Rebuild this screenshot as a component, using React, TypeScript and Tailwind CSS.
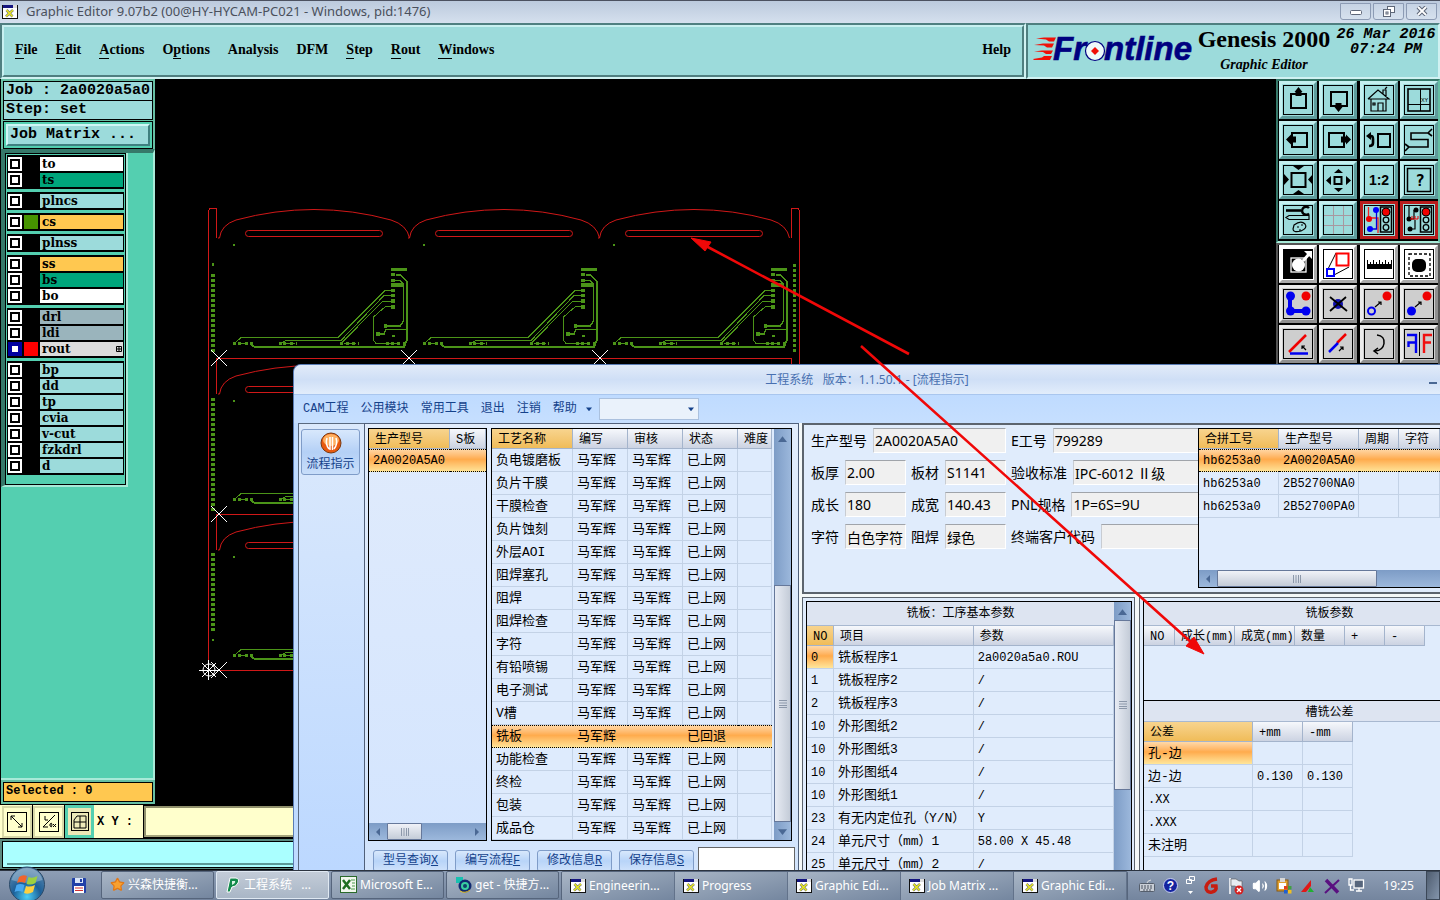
import React from "react";
import { Star, Volume2 } from "lucide-react";

/* ---------- shared bits ---------- */

function XLogo() {
  return (
    <svg width="16" height="16" viewBox="0 0 16 16" aria-hidden="true">
      <rect x="0.5" y="1.5" width="15" height="13" fill="#fff" stroke="#111" />
      <rect x="1" y="1" width="14" height="3" fill="#151580" />
      <rect x="11" y="1" width="4" height="3" fill="#ddd" />
      <path d="M4.5 6l6 6.5M11 6l-7 6.5" stroke="#777" strokeWidth="2.6" />
      <path d="M4.5 6l6 6.5M11 6l-7 6.5" stroke="#e8e820" strokeWidth="1.5" />
    </svg>
  );
}

function Triangle({ d, size = 8, className = "" }: { d: "up" | "down" | "left" | "right"; size?: number; className?: string }) {
  const paths = { up: "M0 7L4 2L8 7Z", down: "M0 2L4 7L8 2Z", left: "M6 0L2 4L6 8Z", right: "M2 0L6 4L2 8Z" };
  return (
    <svg width={size} height={size} viewBox="0 0 8 8" className={className} aria-hidden="true">
      <path d={paths[d]} fill="currentColor" />
    </svg>
  );
}

/* ---------- title bar ---------- */

function TitleBar() {
  const btn =
    "flex h-[17px] w-[31px] items-center justify-center rounded-b-[3px] border border-[#8c9bb4] bg-gradient-to-b from-[#c6d3e4] to-[#d6e1ee]";
  return (
    <header className="flex h-[23px] shrink-0 items-center gap-2 border-t border-[#4c5160] bg-gradient-to-b from-[#bccadd] to-[#d5e0ee] pl-[2px] pr-[3px] text-[13px] leading-5 text-[#4a505c]">
      <XLogo />
      <h1 className="flex-1 truncate pb-[2px] [font-family:'Noto_Sans',sans-serif]">Graphic Editor 9.07b2 (00@HY-HYCAM-PC021 - Windows, pid:1476)</h1>
      <div className="flex gap-[2px] pb-[2px]">
        <button className={btn} aria-label="Minimize">
          <svg width="12" height="10" viewBox="0 0 12 10"><rect x="0.5" y="4.5" width="11" height="4" rx="1" fill="#fff" stroke="#5e6778" /></svg>
        </button>
        <button className={btn} aria-label="Restore">
          <svg width="12" height="11" viewBox="0 0 12 11" fill="#fff" stroke="#5e6778"><rect x="4.5" y="0.5" width="7" height="6" /><rect x="0.5" y="3.5" width="7" height="7" /><rect x="3" y="6" width="2" height="2" /></svg>
        </button>
        <button className={btn} aria-label="Close">
          <svg width="12" height="10" viewBox="0 0 12 10"><path d="M2 1l8 8M10 1L2 9" stroke="#5e6778" strokeWidth="4" /><path d="M2 1l8 8M10 1L2 9" stroke="#fff" strokeWidth="1.8" /></svg>
        </button>
      </div>
    </header>
  );
}

/* ---------- menu header ---------- */

const menus = [
  ["", "F", "ile"],
  ["", "E", "dit"],
  ["", "A", "ctions"],
  ["O", "p", "tions"],
  ["Analysis", "", ""],
  ["DFM", "", ""],
  ["", "S", "tep"],
  ["", "R", "out"],
  ["", "W", "indows"],
];

function MenuHeader() {
  const outer = "border-2 border-b-[#d0f2f2] border-l-[#4f7f80] border-r-[#d0f2f2] border-t-[#4f7f80] bg-[#9cdbdb]";
  return (
    <div className="flex h-14 shrink-0 bg-[#9cdbdb] text-black">
      <div className={`flex-1 ${outer}`}>
        <nav className="flex h-full items-center gap-[18px] border-2 border-b-[#4f7f80] border-l-[#c8f0f0] border-r-[#4f7f80] border-t-[#c8f0f0] px-[11px] pb-[2px] text-sm font-bold [font-family:'Liberation_Serif',serif]">
          {menus.map(([a, b, c]) => (
            <button key={a + b + c} className="leading-4">
              {a}
              {b && <span className="inline-block border-b border-black leading-4">{b}</span>}
              {c}
            </button>
          ))}
          <button className="ml-auto leading-4">Help</button>
        </nav>
      </div>
      <div className={`flex w-[414px] shrink-0 items-start pl-1 ${outer}`}>
        <svg width="162" height="50" viewBox="1032 26 162 50" role="img" aria-label="Frontline" className="shrink-0">
          <g fill="#f01008">
            <path d="M1036 39.500L1044 38.500H1056L1054 42.500H1049L1046 40.500Z" />
            <path d="M1034 46L1043 44.500H1054L1052 48.500H1047L1044 46.500Z" />
            <path d="M1034 52.500L1042 51.500H1053L1051 55H1046L1043 53Z" />
            <path d="M1033 60L1042 58.500L1044 57H1052L1050 61H1034Z" />
          </g>
          <g fill="#000080" stroke="#000080" strokeWidth="0.6" fontFamily="Liberation Sans, sans-serif" fontWeight="700" fontStyle="italic" fontSize="33">
            <text x="1053" y="61">Fr</text>
            <text x="1104" y="61">ntline</text>
          </g>
          <circle cx="1095" cy="52" r="9.500" fill="#eefafa" stroke="#000080" strokeWidth="1.2" />
          <path d="M1095 48l4 4-4 4-4-4Z" fill="#f01008" />
        </svg>
        <div className="flex flex-1 flex-col items-center whitespace-nowrap font-bold [font-family:'Liberation_Serif',serif]">
          <span className="text-2xl leading-7">Genesis 2000</span>
          <span className="text-sm italic leading-6">Graphic Editor</span>
        </div>
        <div className="w-[104px] shrink-0 pt-[2px] text-center text-[15px] font-bold italic leading-[15px] [font-family:'Liberation_Mono',monospace]">
          <div className="whitespace-nowrap">26 Mar 2016</div>
          <div>07:24 PM</div>
        </div>
      </div>
    </div>
  );
}

/* ---------- layer sidebar ---------- */

const WHITE = "bg-white";
const GREEN = "bg-[#00a67c]";
const AQUA = "bg-[#9cdbdb]";
const AMBER = "bg-[#ffc850]";
const SLATE = "bg-[#9ab4bc]";

type Layer = { name: string; color: string; swatch?: string; active?: boolean };
const layerGroups: Layer[][] = [
  [{ name: "to", color: WHITE }, { name: "ts", color: GREEN }],
  [{ name: "plncs", color: AQUA }],
  [{ name: "cs", color: AMBER, swatch: "bg-[#469400]" }],
  [{ name: "plnss", color: AQUA }],
  [{ name: "ss", color: AMBER }, { name: "bs", color: GREEN }, { name: "bo", color: WHITE }],
  [{ name: "drl", color: SLATE }, { name: "ldi", color: SLATE }, { name: "rout", color: "bg-[#dcdcdc]", swatch: "bg-[#ff0000]", active: true }],
  ["bp", "dd", "tp", "cvia", "v-cut", "fzkdrl", "d"].map((name) => ({ name, color: AQUA })),
];

function Sidebar() {
  return (
    <aside className="flex w-[155px] shrink-0 flex-col border-l border-black bg-[#54cfb0] text-black">
      <div className="flex flex-col gap-px border-2 border-b-0 border-[#66bfa4] bg-[#66bfa4] text-[15px] font-bold [font-family:'Liberation_Mono',monospace]">
        <div className="border border-black bg-[#9cdbdb]">
          <div className="h-[19px] whitespace-nowrap border-b border-black pl-[2px] leading-[18px]">Job : 2a0020a5a0</div>
          <div className="h-[18px] pl-[2px] leading-[18px]">Step: set</div>
        </div>
        <div className="border border-black bg-[#54cfb0] p-[2px]">
          <button className="block h-[22px] w-full border-2 border-b-[#3f8080] border-l-[#d0f6f6] border-r-[#3f8080] border-t-[#d0f6f6] bg-[#9cdbdb] pl-[2px] text-left leading-[18px]">
            Job Matrix ...
          </button>
        </div>
      </div>
      <div className="flex-1 border-b-2 border-r-2 border-t-4 border-b-[#a8ead8] border-r-[#a8ead8] border-t-[#36796a]">
        <div className="w-[127px] border-b-2 border-l-4 border-r-2 border-b-[#a8ead8] border-l-[#36796a] border-r-[#a8ead8]">
          <ul className="flex flex-col gap-[3px] border border-black px-[1px] pb-[9px] pt-[1px]">
            {layerGroups.map((group, i) => (
              <li key={i} className="bg-black p-px">
                {group.map((l) => (
                  <label key={l.name} className="flex h-4 items-center gap-[2px] text-xs font-bold [font-family:'DejaVu_Serif',serif]">
                    <span className={`flex size-[14px] items-center justify-center ${l.active ? "bg-[#0000a0]" : "bg-white"}`}>
                      <input type="checkbox" className={`size-[10px] appearance-none border-2 bg-white ${l.active ? "border-[#0000a0]" : "border-black"}`} />
                    </span>
                    <span className={`size-[14px] ${l.swatch ?? "bg-black"}`} />
                    <span className={`flex h-[14px] flex-1 items-center justify-between pl-[2px] pr-[1px] leading-[14px] ${l.color}`}>
                      {l.name}
                      {l.active && (
                        <svg width="6" height="6" viewBox="0 0 6 6" aria-hidden="true"><path d="M.5.5h5v5h-5zM3 0v6M0 3h6" fill="none" stroke="#000" /></svg>
                      )}
                    </span>
                  </label>
                ))}
              </li>
            ))}
          </ul>
        </div>
      </div>
      <div className="border-2 border-[#66bfa4]">
        <div className="h-5 border border-black bg-[#ffc850] pl-[2px] text-xs font-bold leading-[17px] [font-family:'Liberation_Mono',monospace]">Selected : 0</div>
      </div>
    </aside>
  );
}

/* ---------- board drawing ---------- */

function Cell({ x, y }: { x: number; y: number }) {
  return (
    <g transform={`translate(${x} ${y})`} fill="none">
      <g stroke="#d01818">
        <path d="M218 238h1.500Q221 225 236 220Q275 209.500 314 209.500T391 220Q407 225 409.500 238" />
        <rect x="245.500" y="230.500" width="137" height="6" rx="3" />
      </g>
      <g stroke="#4b9418" strokeWidth="1" shapeRendering="crispEdges">
        <path d="M391 290.500H385L338 337.500H241L235 343M391 295.500H384L341 340.500H286L281 343M391 301H383L342 342.500M391 306H386L373.500 317V340L376 343.500H390" />
        <path d="M396 274.500H400L406.500 281V341L404 346.500H254L251 344" strokeWidth="2" />
        <path d="M395 280.500H400L403.500 284V321L400 326H385M378 334H384L386 329.500H406" strokeWidth="1.500" />
        <path d="M238 343.500h10M283 343.500h12M344 343.500h12M388 343.500h12" />
      </g>
      <g fill="#4b9418" shapeRendering="crispEdges">
        <rect x="391" y="268" width="16" height="3" />
        <rect x="391" y="283" width="12" height="4" />
        {[273, 279, 289, 294, 299, 305].map((v) => <rect key={v} x="391" y={v} width="4" height={v > 298 ? 4 : 3} />)}
        {[233, 238, 245, 250, 279, 283, 290, 296, 340, 346, 352, 358, 386, 391, 397, 403].map((v) => <rect key={v} x={v} y="342" width={v === 296 || v === 358 ? 1 : 3} height="3" />)}
        <rect x="384" y="324" width="3" height="4" /><rect x="376" y="332" width="4" height="4" /><rect x="392" y="335" width="3" height="2" />
        <rect x="233" y="244" width="2" height="2" />
      </g>
    </g>
  );
}

function dots(from: number, to: number) {
  const out: number[] = [];
  for (let v = from; v <= to; v += 5) out.push(v);
  return out;
}

function BoardCanvas() {
  return (
    <main className="min-w-0 flex-1 overflow-hidden bg-black">
      <svg width="660" height="700" viewBox="155 79 660 700" role="img" aria-label="Board panel">
        {[0, 156, 312].map((y) => [0, 190, 380].map((x) => <Cell key={`${x}-${y}`} x={x} y={y} />))}
        <g fill="none" stroke="#d01818" shapeRendering="crispEdges">
          <path d="M208.500 670V211L210 208.500H216.500V238M799.500 670V211L798 208.500H791.500V238M217 358.500H791M217 514.500H791M209 670.500H791M216.500 358V394M216.500 514V550M791.500 358V394" />
        </g>
        <g fill="#4b9418">
          <rect x="212" y="263" width="2" height="3" />
          <rect x="212" y="639" width="2" height="2" />
          {[...dots(274, 350), ...dots(398, 510), ...dots(553, 630)].map((v) => <rect key={v} x="211" y={v} width="4" height="3" />)}
          {dots(264, 350).map((v) => <rect key={v} x="793" y={v} width="3" height="3" />)}
        </g>
        <g stroke="#fff" strokeWidth="1">
          {[[219, 358], [409, 358], [600, 358], [219, 514], [219, 670]].map(([x, y]) => (
            <path key={`${x}-${y}`} d={`M${x - 8} ${y - 8}l16 16m0-16l-16 16`} />
          ))}
          <circle cx="209" cy="670" r="6" fill="none" />
          <path d="M199 670.500h20M208.500 660v20M202 663l14 14M216 663l-14 14" />
        </g>
      </svg>
    </main>
  );
}

/* ---------- tool palette ---------- */

const K = { fill: "none", stroke: "#000", strokeWidth: 2 };
type Tool = { label: string; tone?: "red" | "white" | "gray"; art: React.ReactNode };

const trafficLight = (
  <g>
    <rect x="20.500" y="6" width="11" height="25" fill="#9cdbdb" stroke="#000" strokeWidth="1.500" />
    <circle cx="26" cy="11" r="4" fill="#f00000" stroke="#000" />
    <circle cx="26" cy="19" r="2.800" {...K} strokeWidth={1.3} />
    <circle cx="26" cy="26.500" r="2.800" {...K} strokeWidth={1.3} />
  </g>
);

const topTools: Tool[] = [
  { label: "Pan up", art: <><rect x="12" y="13" width="15" height="14" {...K} /><path d="M19.500 6l4 5h-1v4h-6v-4h-1z" /></> },
  { label: "Pan down", art: <><rect x="12" y="11" width="16" height="14" {...K} /><path d="M19.500 31l4-5h-1v-4h-6v4h-1z" /></> },
  { label: "Home", art: <><path d="M8 18L18 9L29 18H8M11 18V30H26V18M18 30V22H23V30M13 22h2v2h-2zM23 13V9h3v7M25 8l2-2" {...K} strokeWidth={1.2} /></> },
  { label: "XY view", art: <><rect x="8" y="8" width="22" height="22" {...K} strokeWidth={1.6} /><path d="M20.500 8V30M8 23.500H30" {...K} strokeWidth={1} /><text x="21" y="21" fontSize="6" fontFamily="Liberation Mono, monospace">XY</text></> },
  { label: "Pan left", art: <><rect x="13" y="12" width="15" height="14" {...K} /><path d="M7 18.500l5-5v2h5v6h-5v2z" /></> },
  { label: "Pan right", art: <><rect x="10" y="12" width="15" height="14" {...K} /><path d="M32 18.500l-5-5v2h-5v6h5v2z" /></> },
  { label: "Previous view", art: <><rect x="18" y="13" width="12" height="13" {...K} /><path d="M9 15h2q2 0 2 3v4q0 3-4 3" {...K} strokeWidth={2.6} /><path d="M6 15l5-4v8z" /></> },
  { label: "Route", art: <path d="M28 12H11V18.500H28V26H9M28 12l4-4M28 12l4 3M9 26l-4 4M9 26l-4-3" {...K} strokeWidth={1.6} /> },
  { label: "Zoom in", art: <><rect x="12.500" y="12" width="14" height="14" {...K} /><path d="M14 5h11l-5.500 4zM14 33h11l-5.500-4zM5 13l5 5.500-5 5.500zM34 13l-5 5.500 5 5.500z" /></> },
  { label: "Zoom out", art: <><rect x="15.500" y="16" width="7" height="7" {...K} /><path d="M15 12h9l-4.500-4zM15 27h9l-4.500 4zM12 15l-5 4.500 5 4.500zM27 15l5 4.500-5 4.500z" /></> },
  { label: "Scale 1:2", art: <text x="19" y="24" textAnchor="middle" fontSize="14" fontWeight="700" fontFamily="Liberation Sans, sans-serif">1:2</text> },
  { label: "Query", art: <><rect x="7.500" y="7.500" width="23" height="23" {...K} strokeWidth={1.5} /><text x="20" y="25" textAnchor="middle" fontSize="16" fontWeight="700" fontFamily="DejaVu Sans Mono, monospace">?</text></> },
  { label: "Settings", art: <><path d="M7 9.500H22" {...K} strokeWidth={2.6} /><path d="M30 7a4 4 0 1 0 0 5.500" {...K} strokeWidth={2.4} /><path d="M7 16.500l3-2H30v4H10z" {...K} strokeWidth={1.2} /><path d="M15 24q7-5 11-1q3 4-4 7q-8 2-8-2zM18 26h2M22 24h2M20 29h2" {...K} strokeWidth={1.2} /></> },
  { label: "Grid", art: <path d="M14.500 5V33M24.500 5V33M5 14.500H33M5 24.500H33" fill="none" stroke="#a898a0" /> },
  { label: "Online check", tone: "red", art: <><path d="M8.500 6V17H18V32" fill="none" stroke="#f02020" strokeWidth="1.300" /><circle cx="9" cy="18" r="3" fill="#e00" /><path d="M16.500 9V28H10" fill="none" stroke="#0000e0" strokeWidth="1.300" /><circle cx="16" cy="9" r="3" fill="#00f" /><circle cx="10" cy="28" r="3" fill="#00f" />{trafficLight}</> },
  { label: "Net check", tone: "red", art: <><path d="M9 5V18H14V9M9 28H15V19" {...K} strokeWidth={1.2} /><circle cx="9" cy="18" r="2.500" /><circle cx="16" cy="9" r="2.500" /><circle cx="10" cy="28" r="2.500" /><path d="M10 18h8M12 15v3M15 15v3M18 15v3" stroke="#e00" fill="none" />{trafficLight}</> },
];

const bottomTools: Tool[] = [
  { label: "Select single", tone: "white", art: <><rect x="5" y="5" width="28" height="28" /><rect x="12" y="13" width="15" height="14" fill="none" stroke="#fff" strokeWidth="1.300" /><circle cx="19.500" cy="20" r="6.500" fill="#fff" /><path d="M24 16l6-7" stroke="#fff" strokeWidth="3" /><path d="M25 6h8v8z" fill="#fff" /></> },
  { label: "Select shape", tone: "white", art: <><path d="M9 24L17 8M15 30L30 22" {...K} strokeWidth={1} /><rect x="17.500" y="8.500" width="12" height="12" fill="none" stroke="#f00" strokeWidth="2" /><rect x="8" y="24" width="7" height="7" fill="none" stroke="#00f" strokeWidth="2" /></> },
  { label: "Measure", tone: "white", art: <><rect x="7" y="19" width="25" height="5" /><path d="M7.500 15V20M10.500 17V20M13.500 15V20M16.500 17V20M19.500 15V20M22.500 17V20M25.500 15V20M28.500 17V20M31.500 15V20" stroke="#000" /></> },
  { label: "Select area", tone: "white", art: <><rect x="9" y="9" width="21" height="22" {...K} strokeWidth={1.3} strokeDasharray="3 2" /><rect x="12" y="14" width="14" height="13" rx="5" /></> },
  { label: "Connect", tone: "gray", art: <g fill="#0000f0"><path d="M11 10V26H27" fill="none" stroke="#0000f0" strokeWidth="4" /><circle cx="11.500" cy="11" r="4.500" /><circle cx="11.500" cy="26" r="4.500" /><circle cx="27" cy="26" r="4.500" /><circle cx="27" cy="11" r="4.500" fill="#f00000" /></g> },
  { label: "Delete", tone: "gray", art: <><circle cx="19" cy="19" r="5" fill="#1010b0" /><path d="M11 12l17 14M27 12L11 26" {...K} strokeWidth={1.800} /></> },
  { label: "Copy", tone: "gray", art: <><circle cx="11.500" cy="26" r="3.500" fill="none" stroke="#0000f0" strokeWidth="2" /><circle cx="27" cy="11" r="4.500" fill="#f00000" /><path d="M15 22l6-5M18 17h3v3" {...K} strokeWidth={1.200} /></> },
  { label: "Move", tone: "gray", art: <><circle cx="11.500" cy="26" r="4.500" fill="#0000f0" /><circle cx="27" cy="11" r="4.500" fill="#f00000" /><path d="M15 22l6-5M18 17h3v3" {...K} strokeWidth={1.200} /></> },
  { label: "Angle", tone: "gray", art: <><path d="M10 27L27 10" stroke="#f00000" strokeWidth="2.500" /><path d="M11 28.500H29" stroke="#0000f0" strokeWidth="2.500" /><path d="M27 25l-4-4M23 24v-3h3" {...K} strokeWidth={1.200} /></> },
  { label: "Stretch", tone: "gray", art: <><path d="M18 18L27 9" stroke="#f00000" strokeWidth="2.500" /><path d="M10 27L19 18" stroke="#0000f0" strokeWidth="2.500" /><path d="M20 26l4-4M21 22h3v3" {...K} strokeWidth={1.200} /></> },
  { label: "Rotate", tone: "gray", art: <path d="M17 10q8 1 7 8.500q-1 7-9 7.500M18 23l-4 3 4 3" {...K} strokeWidth={1.500} /> },
  { label: "Mirror", tone: "gray", art: <><path d="M7 10H16V28M16 17.500H8.500V22" fill="none" stroke="#0000f0" strokeWidth="2.400" /><path d="M19.500 7V31" stroke="#000" /><path d="M32 10H24V28M24 17.500H31" fill="none" stroke="#f01010" strokeWidth="2.400" /></> },
];

function ToolButton({ tool }: { tool: Tool }) {
  const tones = {
    none: "border-b-[#5f9c9c] border-l-[#c4f0f0] border-r-[#5f9c9c] border-t-[#c4f0f0] bg-[#9cdbdb]",
    red: "border-[#b81c1c] bg-[#9cdbdb]",
    white: "border-b-[#aaaaaa] border-l-white border-r-[#aaaaaa] border-t-white bg-white",
    gray: "border-b-[#8f8f8f] border-l-[#ececec] border-r-[#8f8f8f] border-t-[#ececec] bg-[#cecece]",
  };
  return (
    <button aria-label={tool.label} className={`flex size-[38px] items-center justify-center border-[3px] ${tones[tool.tone ?? "none"]}`}>
      <svg width="38" height="38" viewBox="0 0 38 38" className="shrink-0">
        <rect x="4.500" y="4.500" width="29" height="29" fill="none" stroke="#000" />
        {tool.art}
      </svg>
    </button>
  );
}

function ToolPalette() {
  return (
    <aside className="w-[164px] shrink-0 bg-black">
      <div className="grid grid-cols-4 gap-[2px] border-x-2 border-t-2 border-b-2 border-b-[#a8ead8] border-l-[#36796a] border-r-[#66bfa4] border-t-[#36796a] pb-[2px] pl-px">
        {topTools.map((t) => <ToolButton key={t.label} tool={t} />)}
      </div>
      <div className="grid grid-cols-4 gap-[2px] border-x-2 border-t-2 border-[#555555] pb-px pl-px">
        {bottomTools.map((t) => <ToolButton key={t.label} tool={t} />)}
      </div>
    </aside>
  );
}

/* ---------- coordinate and status rows ---------- */

function BottomRows() {
  const btn = "flex h-8 items-center justify-center border-2";
  return (
    <div className="shrink-0 bg-[#5c8a80]">
      <div className="flex h-[35px] items-center border-y border-black bg-[#ffffcc] text-black">
        <button aria-label="Resize" className={`ml-[2px] w-[30px] border-[#d8d8a8] ${btn}`}>
          <svg width="20" height="20" viewBox="0 0 20 20" fill="none" stroke="#000"><rect x=".5" y=".5" width="19" height="19" /><path d="M4 4l11 11M4 8V4h4M15 11v4h-4" /></svg>
        </button>
        <span className="h-full w-px bg-black" />
        <button aria-label="Angle" className={`w-[31px] border-[#d8d8a8] ${btn}`}>
          <svg width="20" height="20" viewBox="0 0 20 20" fill="none" stroke="#000"><rect x=".5" y=".5" width="19" height="19" /><path d="M16 3L4 15h5M6 4v4h3M11 12q2-2 2 1t-2 1zM14 12l3 3m0-3l-3 3" /></svg>
        </button>
        <span className="h-full w-px bg-black" />
        <button aria-label="Grid snap" className="flex h-[33px] w-[29px] items-center justify-center border-[3px] border-[#54cfb0] bg-[#ece8b8]">
          <svg width="18" height="20" viewBox="0 0 18 20" fill="none" stroke="#000"><rect x=".5" y=".5" width="17" height="18" /><path d="M6 4H15V16H3V8zM9 4V16M3 10H15" /></svg>
        </button>
        <label htmlFor="xy" className="w-[50px] shrink-0 whitespace-pre pl-[3px] text-xs font-bold [font-family:'Liberation_Mono',monospace]">X Y :</label>
        <input id="xy" className="h-[31px] min-w-0 flex-1 border-2 border-b-[#a4a47c] border-l-[#90906c] border-r-[#e4e4b4] border-t-[#90906c] bg-[#ffffcc] px-1 outline outline-1 outline-black" />
      </div>
      <div className="h-[31px] border-b border-t-2 border-b-black border-t-[#5c8a80] px-[2px]">
        <div className="h-[27px] border border-black bg-[#aaffff] pb-[2px] pl-1">
          <div className="h-full border-b-2 border-[#5c9a98]" />
        </div>
      </div>
    </div>
  );
}

/* ---------- engineering system window ---------- */

const HEAD = "bg-gradient-to-b from-[#f6f8fc] to-[#ccd3e2]";
const HEAD_HOT = "bg-gradient-to-b from-[#f8d48e] to-[#f0bc58]";
const ROW_HOT = "bg-gradient-to-b from-[#ffd9a8] from-0% via-[#ffab4c] via-45% to-[#ffe69a] to-100%";
const MONO = "[font-family:'Liberation_Mono','Noto_Sans_CJK_SC',monospace]";

type GridProps = {
  label: string;
  cols: number[];
  head: string[];
  rows: string[][];
  hotRow?: number;
  hotFirstCell?: boolean;
  hotHead?: boolean;
  title?: string;
  titleHeight?: string;
  width: string;
};

function Grid({ label, cols, head, rows, hotRow, hotFirstCell, hotHead = true, title, titleHeight = "h-6", width }: GridProps) {
  return (
    <div className={width}>
      {title && <div className={`border-b border-[#a8b8d0] bg-[#dde4f1] text-center text-xs leading-6 ${titleHeight}`}>{title}</div>}
      <table aria-label={label} className="table-fixed border-separate border-spacing-0 text-left">
        <colgroup>
          {cols.map((w, i) => <col key={i} style={{ width: w }} />)}
        </colgroup>
        <thead>
          <tr className="h-5">
            {head.map((h, i) => (
              <th key={i} className={`h-5 overflow-hidden whitespace-nowrap border-b border-r border-[#a4b4cc] p-0 pl-[6px] pt-[3px] text-xs font-normal leading-4 ${i === 0 && hotHead ? HEAD_HOT : HEAD}`}>
                {h}
              </th>
            ))}
          </tr>
        </thead>
        <tbody>
          {rows.map((r, ri) => {
            const hot = ri === hotRow && !hotFirstCell;
            return (
              <tr key={ri} className={`h-[23px] ${hot ? ROW_HOT : ""}`}>
                {r.map((c, ci) => (
                  <td
                    key={ci}
                    className={`h-[23px] overflow-hidden whitespace-nowrap p-0 pl-1 leading-5 ${/^[\x20-\x7e]*$/.test(c) ? "text-xs" : "text-[13px]"} ${
                      hot ? "border-y border-dotted border-black pt-px" : "border-b border-r border-[#c3d2e6] pt-[2px]"
                    } ${ri === hotRow && hotFirstCell && ci === 0 ? ROW_HOT : ""}`}
                  >
                    {c}
                  </td>
                ))}
              </tr>
            );
          })}
        </tbody>
      </table>
    </div>
  );
}

const TRACK = "bg-gradient-to-r from-[#7d9cc6] to-[#9cb8dc]";
const TRACK_H = "bg-gradient-to-b from-[#7d9cc6] to-[#9cb8dc]";

function Grip({ vertical }: { vertical?: boolean }) {
  return (
    <svg width="8" height="8" viewBox="0 0 8 8" aria-hidden="true" className={vertical ? "rotate-90" : ""}>
      <path d="M.5 0v8M3 0v8M5.500 0v8M7.500 0v8" stroke="#8c98aa" />
    </svg>
  );
}

function VScroll({ thumb, down }: { thumb: string; down?: boolean }) {
  return (
    <div className={`flex w-[17px] shrink-0 flex-col items-center text-[#4a6894] ${TRACK}`}>
      <div className="flex h-[18px] items-center"><Triangle d="up" size={9} /></div>
      <div className={`flex w-full items-center justify-center border border-[#66789a] bg-gradient-to-r from-[#e8ecf4] to-[#c4ccd8] ${thumb}`}><Grip vertical /></div>
      {down && <div className="flex h-[18px] items-center"><Triangle d="down" size={9} /></div>}
    </div>
  );
}

function HScroll({ thumb, end }: { thumb: string; end?: boolean }) {
  return (
    <div className={`mt-auto flex h-[17px] shrink-0 items-center text-[#4a6894] ${TRACK_H}`}>
      <div className="flex w-[18px] justify-center"><Triangle d="left" /></div>
      <div className={`flex h-full items-center justify-center rounded-[1px] border border-[#66789a] bg-gradient-to-b from-[#f0f2f8] to-[#c4ccd8] ${thumb}`}><Grip /></div>
      {end && <div className="ml-auto flex w-[18px] justify-center"><Triangle d="right" /></div>}
    </div>
  );
}

const steps = ["负电镀磨板", "负片干膜", "干膜检查", "负片蚀刻", "外层AOI", "阻焊塞孔", "阻焊", "阻焊检查", "字符", "有铅喷锡", "电子测试", "V槽", "铣板", "功能检查", "终检", "包装", "成品仓"];
const stepRows = steps.map((s) => (s === "铣板" ? [s, "马军辉", "", "已回退", ""] : [s, "马军辉", "马军辉", "已上网", ""]));

const paramRows = [
  ["0", "铣板程序1", "2a0020a5a0.ROU"],
  ["1", "铣板程序2", "/"],
  ["2", "铣板程序3", "/"],
  ["10", "外形图纸2", "/"],
  ["10", "外形图纸3", "/"],
  ["10", "外形图纸4", "/"],
  ["10", "外形图纸1", "/"],
  ["23", "有无内定位孔（Y/N）", "Y"],
  ["24", "单元尺寸（mm）1", "58.00 X 45.48"],
  ["25", "单元尺寸（mm）2", "/"],
];

const actions = [["型号查询", "X"], ["编写流程", "F"], ["修改信息", "R"], ["保存信息", "S"]];

function Field({ id, label, value, box }: { id: string; label: string; value: string; box: string }) {
  return (
    <div className={`flex items-center gap-[6px] ${box}`}>
      <label htmlFor={id} className="shrink-0 whitespace-nowrap">{label}</label>
      <input id={id} readOnly value={value} className="h-[25px] min-w-0 flex-1 border border-b-white border-l-[#c8ccd2] border-r-white border-t-[#a0a4aa] bg-[#f0f0f0] px-px" />
    </div>
  );
}

const fieldRows = [
  [["生产型号", "2A0020A5A0", "w-[195px]"], ["E工号", "799289", "flex-1"]],
  [["板厚", "2.00", "w-[95px]"], ["板材", "S1141", "w-[95px]"], ["验收标准", "IPC-6012 Ⅱ级", "flex-1"]],
  [["成长", "180", "w-[95px]"], ["成宽", "140.43", "w-[95px]"], ["PNL规格", "1P=6S=9U", "flex-1"]],
  [["字符", "白色字符", "w-[95px]"], ["阻焊", "绿色", "w-[95px]"], ["终端客户代码", "", "flex-1"]],
];

function EngineeringWindow() {
  return (
    <section className="absolute bottom-[30px] left-[293px] right-0 top-[364px] flex flex-col overflow-hidden rounded-tl-lg border-l border-t border-[#5a7cb4] bg-[#bfdbff] text-black [font-family:'Noto_Sans','Noto_Sans_CJK_SC',sans-serif]">
      <div className="relative flex h-[30px] shrink-0 items-center justify-center border-b border-[#a9c6ee] bg-gradient-to-b from-[#e2ebf9] via-[#cfdff6] to-[#e2edfb] text-xs text-[#4870b0]">
        <h2 className="whitespace-pre">工程系统   版本：1.1.50.1 - [流程指示]</h2>
        <button aria-label="最小化" className="absolute bottom-[10px] right-[3px] h-[2px] w-2 bg-[#4a6894]" />
      </div>
      <nav className={`flex h-7 shrink-0 items-center gap-3 bg-gradient-to-b from-[#bfdbff] to-[#c6dfff] pl-[9px] text-xs text-[#15428b] ${MONO}`}>
        {["CAM工程", "公用模块", "常用工具", "退出", "注销", "帮助"].map((m) => <button key={m}>{m}</button>)}
        <Triangle d="down" size={6} className="-ml-[3px]" />
        <div className="-ml-[5px] flex h-[22px] w-[100px] items-center border border-[#abc1de] bg-[#eaf2fb] pr-1">
          <select aria-label="主题" className="min-w-0 flex-1 appearance-none bg-transparent"><option></option></select>
          <Triangle d="down" size={6} />
        </div>
      </nav>
      <div className="flex min-h-0 flex-1 pl-1">
        <div className="w-[66px] shrink-0 border-l border-t border-[#5a6a80] bg-gradient-to-b from-[#dbe9fc] to-[#bcd8ff] pl-[2px] pt-[5px]">
          <button className="flex h-[46px] w-[59px] flex-col items-center justify-between rounded-[3px] border border-[#7f9cc8] bg-gradient-to-b from-[#d8e8fc] via-[#b4d0f6] to-[#c8defa] pb-[2px] pt-[2px] text-xs leading-4 text-[#15428b]">
            <svg width="22" height="22" viewBox="0 0 22 22" aria-hidden="true">
              <circle cx="11" cy="11" r="10" fill="#e85a10" stroke="#7a3a10" />
              <ellipse cx="11" cy="8" rx="8" ry="6" fill="#ffb060" />
              <path d="M7 6q-2 6 2 11M10 5v13M12.500 5v13M16 6q2 6-2 11" fill="none" stroke="#fff" strokeWidth="1.500" />
            </svg>
            <span>流程指示</span>
          </button>
        </div>
        <div className="flex w-[435px] shrink-0 flex-col gap-[6px] border-l border-r border-t border-[#50607a] bg-gradient-to-b from-[#e2edfc] to-[#d2e4fc] pl-[3px] pt-1">
          <div className={`flex h-[414px] gap-1 ${MONO}`}>
            <div className="flex w-[119px] flex-col overflow-hidden border border-black bg-gradient-to-b from-[#e0ebfc] to-[#d4e5fe]">
              <Grid label="生产型号" width="w-full" cols={[81, 36]} head={["生产型号", "S板"]} rows={[["2A0020A5A0", ""]]} hotRow={0} />
              <HScroll thumb="w-[35px]" end />
            </div>
            <div className="flex w-[301px] justify-between overflow-hidden border border-black bg-[#deebfd]">
              <Grid label="工艺流程" width="w-[280px]" cols={[81, 55, 55, 55, 34]} head={["工艺名称", "编写", "审核", "状态", "难度"]} rows={stepRows} hotRow={12} />
              <div className={`flex w-[17px] flex-col items-center text-[#4a6894] ${TRACK}`}>
                <div className="flex h-[18px] items-center"><Triangle d="up" size={9} /></div>
                <div className="mt-auto flex h-[237px] w-full items-center justify-center border border-[#66789a] bg-gradient-to-r from-[#e8ecf4] to-[#c4ccd8]"><Grip vertical /></div>
                <div className="flex h-[18px] items-center"><Triangle d="down" size={9} /></div>
              </div>
            </div>
          </div>
          <div className={`flex items-start gap-[7px] pl-[5px] ${MONO}`}>
            {actions.map(([t, k]) => (
              <button key={t} className="mt-[3px] h-[22px] w-[75px] shrink-0 rounded-[3px] border border-[#7f9cc8] bg-gradient-to-b from-[#d8e8fc] via-[#b8d4f8] to-[#cfe2fb] text-xs leading-5 text-[#15428b]">
                {t}<u>{k}</u>
              </button>
            ))}
            <input aria-label="备注" className="-ml-[3px] mr-[3px] h-6 min-w-0 flex-1 border border-[#666666] bg-white" />
          </div>
        </div>
        <div className="flex min-w-0 flex-1 flex-col gap-[3px] bg-[#f4f8f8] pl-[3px]">
          <div className="flex h-[171px] shrink-0 justify-between overflow-hidden border-b-2 border-l-2 border-t-2 border-[#5c646e] bg-[#e0ecfc] pl-[7px] pt-[3px]">
            <div className="flex w-[385px] shrink-0 flex-col gap-[7px] text-sm">
              {fieldRows.map((row, i) => (
                <div key={i} className="flex gap-[5px]">
                  {row.map(([l, v, w]) => <Field key={l} id={`f-${l}`} label={l} value={v} box={w} />)}
                </div>
              ))}
            </div>
            <div className={`ml-[2px] flex h-[160px] min-w-0 flex-1 flex-col overflow-hidden border border-r-0 border-black bg-[#e0ecfd] ${MONO}`}>
              <Grid label="合拼工号" width="w-[241px]" cols={[80, 80, 40, 41]} head={["合拼工号", "生产型号", "周期", "字符"]} rows={[["hb6253a0", "2A0020A5A0", "", ""], ["hb6253a0", "2B52700NA0", "", ""], ["hb6253a0", "2B52700PA0", "", ""]]} hotRow={0} />
              <HScroll thumb="w-[160px]" />
            </div>
          </div>
          <div className={`flex min-h-0 flex-1 gap-1 ${MONO}`}>
            <div className="w-[333px] shrink-0 overflow-hidden border-l border-r border-t border-[#5c646e] bg-[#e0ecfc] pl-[3px] pr-[2px] pt-[3px]">
              <div className="flex h-full justify-between overflow-hidden border border-b-0 border-black">
                <Grid label="工序基本参数" title="铣板：工序基本参数" width="w-[308px]" cols={[27, 140, 141]} head={["NO", "项目", "参数"]} rows={paramRows} hotRow={0} hotFirstCell />
                <VScroll thumb="h-[170px]" />
              </div>
            </div>
            <div className="min-w-0 flex-1 overflow-hidden border-l border-t border-[#5c646e] bg-[#e0ecfc] pl-[3px] pt-[3px]">
              <div className="flex h-full w-[372px] flex-col border-l border-t border-black">
                <div className="h-[99px] border-b border-black">
                  <Grid label="铣板参数" title="铣板参数" width="w-full" cols={[31, 60, 60, 50, 40, 40]} head={["NO", "成长(mm)", "成宽(mm)", "数量", "+", "-"]} rows={[]} hotHead={false} />
                </div>
                <Grid label="槽铣公差" title="槽铣公差" titleHeight="h-[21px]" width="w-full" cols={[109, 50, 50]} head={["公差", "+mm", "-mm"]} rows={[["孔-边", "", ""], ["边-边", "0.130", "0.130"], [".XX", "", ""], [".XXX", "", ""], ["未注明", "", ""]]} hotRow={0} hotFirstCell />
              </div>
            </div>
          </div>
        </div>
      </div>
    </section>
  );
}

/* ---------- annotation arrows ---------- */

function Arrows() {
  return (
    <svg className="pointer-events-none absolute left-0 top-0" width="1440" height="870" viewBox="0 0 1440 870" aria-hidden="true">
      <g stroke="#f00808" strokeWidth="2.600" fill="#f00808">
        <path d="M909 354L706 246M861 346L1192 643" />
        <path d="M691 238l20 4-6 9zM1204 654l-18-8 8-9z" strokeWidth="1" />
      </g>
    </svg>
  );
}

/* ---------- taskbar ---------- */

function TaskButton({ icon, text, active, joined }: { icon: React.ReactNode; text: string; active?: boolean; joined?: boolean }) {
  return (
    <button
      className={`flex h-7 w-[113px] shrink-0 items-center gap-[3px] whitespace-pre pl-2 text-xs text-white ${
        active ? "rounded-[2px] border border-[#dfe8f2] bg-gradient-to-b from-[#c3ccd8] to-[#a9b6c6]" : "bg-gradient-to-br from-[#a9b6c6] to-[#74869f]"
      } ${joined ? "border-r border-[#62728a]" : active ? "" : "rounded-[2px] border border-[#56657c]"}`}
    >
      {icon}
      <span>{text}</span>
    </button>
  );
}

const sheetIcon = (
  <svg width="17" height="17" viewBox="0 0 17 17" aria-hidden="true"><rect x=".5" y=".5" width="16" height="16" fill="#f2f8ee" stroke="#2a6a2a" /><path d="M3 4l7 9M10 4l-7 9" stroke="#207020" strokeWidth="2.500" /><path d="M11 4h4M12 7h3M12 10h3M11 13h4" stroke="#4a9a4a" /></svg>
);
const pIcon = (
  <svg width="16" height="18" viewBox="0 0 16 18" aria-hidden="true"><path d="M5 2h6q4 1 2 5t-6 4l-2 5H2z" fill="#128a4c" stroke="#fff" /><path d="M7 5h3q1 2-3 4z" fill="#d8f4e4" /></svg>
);
const getIcon = (
  <svg width="17" height="17" viewBox="0 0 17 17" aria-hidden="true"><rect x="1" y="1" width="7" height="6" fill="#18c0b0" /><circle cx="10" cy="10" r="6.500" fill="#102a70" /><circle cx="10" cy="10" r="4" fill="#38d0a0" /><circle cx="10" cy="10" r="2" fill="#10406a" /><path d="M5 15q5 3 10-1" stroke="#e8c020" fill="none" /></svg>
);

function Tray() {
  return (
    <div className="flex h-full items-center gap-2 text-white">
      <svg width="16" height="14" viewBox="0 0 16 14"><path d="M8 4q0-2 4-3" fill="none" stroke="#ddd" /><rect x=".5" y="4.500" width="15" height="8" rx="1" fill="#c9ced6" stroke="#555e6c" /><path d="M2 7h12M2 9h12M4 11h8" stroke="#4a5260" strokeDasharray="2 1" /></svg>
      <svg width="15" height="16" viewBox="0 0 15 16"><circle cx="7.500" cy="7.500" r="7" fill="#1424a0" stroke="#c8d0f0" /><text x="7.500" y="12" textAnchor="middle" fontSize="12" fontWeight="700" fill="#fff" fontFamily="Liberation Sans, sans-serif">?</text></svg>
      <svg width="9" height="20" viewBox="0 0 9 20" fill="none" stroke="#fff"><path d="M3.500.5h5v4h-5zM.5 3.500h5v4h-5z" /><path d="M2 15h5l-2.500 3z" fill="#fff" stroke="none" /></svg>
      <svg width="16" height="18" viewBox="0 0 16 18"><path d="M14 2Q5 3 3 10q0 6 6 5q5-1 4-6H8" fill="none" stroke="#c81c10" strokeWidth="3.500" /></svg>
      <svg width="17" height="18" viewBox="0 0 17 18"><path d="M3 1V17" stroke="#fff" strokeWidth="1.500" /><path d="M4 2h5l3 2h3v7h-4l-3-2H4z" fill="#e8ecf2" stroke="#555" strokeWidth=".6" /><circle cx="12" cy="13" r="4.500" fill="#d42020" /><path d="M10 11l4 4m0-4l-4 4" stroke="#fff" strokeWidth="1.400" /></svg>
      <Volume2 size={16} fill="#fff" strokeWidth={1.6} />
      <svg width="16" height="18" viewBox="0 0 16 18"><rect x="1" y="3" width="11" height="11" fill="#e0a030" stroke="#8a5a10" /><rect x="4" y="1" width="5" height="4" fill="#d8d8d8" /><rect x="3" y="6" width="7" height="6" fill="#fff" /><rect x="8" y="9" width="3.500" height="3.500" fill="#e04020" /><rect x="12" y="9" width="3.500" height="3.500" fill="#40a040" /><rect x="8" y="13" width="3.500" height="3.500" fill="#2060d0" /><rect x="12" y="13" width="3.500" height="3.500" fill="#f0c020" /></svg>
      <svg width="16" height="16" viewBox="0 0 16 16"><path d="M1 14L11 2v6L6 14z" fill="#e01818" /><path d="M10 9l4 5H8z" fill="#20b030" /></svg>
      <svg width="16" height="16" viewBox="0 0 16 16"><path d="M2 2L14 14.500" stroke="#5a1080" strokeWidth="3.500" /><path d="M15 2L1 15" stroke="#5a1080" strokeWidth="2" /></svg>
      <svg width="17" height="17" viewBox="0 0 17 17" fill="none" stroke="#fff" strokeWidth="1.300"><rect x="6" y="3" width="9.500" height="8" fill="#56657c" /><path d="M8 14h6M11 11v3M1 2h3v6H1zM2.500 8v5H6" /></svg>
    </div>
  );
}

function Taskbar() {
  return (
    <footer className="relative flex h-[30px] shrink-0 items-center border-t border-[#2c3440] bg-gradient-to-b from-[#8e9eb5] to-[#74859e] [font-family:'Noto_Sans','Noto_Sans_CJK_SC',sans-serif]">
      <button aria-label="Start" className="absolute -top-[5px] left-2">
        <svg width="38" height="35" viewBox="0 0 38 35">
          <defs>
            <radialGradient id="orb" cx=".5" cy=".85" r=".8"><stop offset="0" stopColor="#4ad0f8" /><stop offset=".5" stopColor="#1c5f98" /><stop offset="1" stopColor="#5a86ac" /></radialGradient>
          </defs>
          <circle cx="19" cy="18.500" r="17.500" fill="url(#orb)" stroke="#2c4a68" />
          <path d="M3.500 14a16 16 0 0 1 31 0q-15 6-31 0z" fill="#fff" opacity=".28" />
          <path d="M11 11q4-3 8-1l-2 7q-4-2-8 0z" fill="#f0642c" />
          <path d="M20.500 11q4 2 9-1l-2 7q-4 2.500-9 1z" fill="#9cd040" />
          <path d="M8.500 19q4-2 8 0l-2 7q-4-2-8 0z" fill="#48a8f0" />
          <path d="M18 20q4 1.500 9-1l-2 7q-5 3-9 1z" fill="#fcd040" />
        </svg>
      </button>
      <button aria-label="Save" className="ml-[71px] mr-[14px]">
        <svg width="16" height="17" viewBox="0 0 16 17"><rect x="1" y="1" width="14" height="15" rx="1" fill="#2040a8" /><rect x="4" y="1" width="8" height="5" fill="#d8e4f8" /><rect x="9" y="2" width="2" height="3" fill="#2040a8" /><rect x="3" y="9" width="10" height="7" fill="#fff" /><path d="M4 11h8M4 13.500h8" stroke="#d03030" /></svg>
      </button>
      <div className="flex gap-[2px]">
        <TaskButton icon={<Star size={15} fill="#f8a030" color="#e07818" />} text="兴森快捷衡..." />
        <TaskButton icon={pIcon} text="工程系统   ..." active />
        <TaskButton icon={sheetIcon} text="Microsoft E..." />
        <TaskButton icon={getIcon} text="get - 快捷方..." />
        <div className="flex overflow-hidden rounded-[2px] border border-[#56657c]">
          {["Engineerin...", "Progress", "Graphic Edi...", "Job Matrix ...", "Graphic Edi..."].map((t, i) => <TaskButton key={i} icon={<XLogo />} text={t} joined />)}
        </div>
      </div>
      <div className="ml-auto flex h-full items-center gap-[18px]">
        <Tray />
        <time className="text-xs text-white">19:25</time>
        <button aria-label="Show desktop" className="-ml-[6px] h-full w-[14px] border border-[#3c4858] bg-gradient-to-br from-[#4f5d70] to-[#8495ac]" />
      </div>
    </footer>
  );
}

export default function App() {
  return (
    <div className="relative flex h-screen flex-col overflow-hidden bg-black">
      <TitleBar />
      <MenuHeader />
      <div className="flex min-h-0 flex-1">
        <Sidebar />
        <BoardCanvas />
        <ToolPalette />
      </div>
      <BottomRows />
      <EngineeringWindow />
      <Arrows />
      <Taskbar />
    </div>
  );
}
